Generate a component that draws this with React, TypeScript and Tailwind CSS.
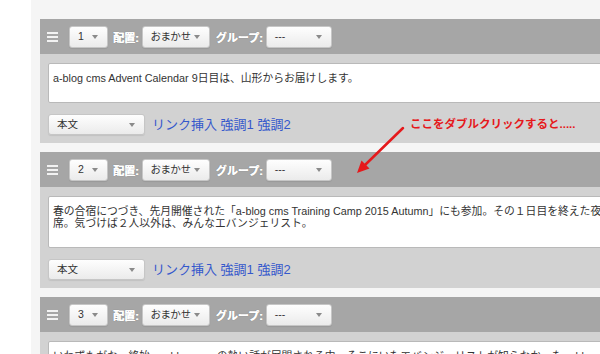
import { ReactNode } from 'react';

const font = "font-['Liberation_Sans','Noto_Sans_CJK_JP',sans-serif]";

const Select = ({ label, width, height = 'h-[22px]' }: { label: string; width: string; height?: string }) => (
  <div
    className={`${width} ${height} flex items-center justify-between rounded-[3px] border border-[#c6c6c6] bg-gradient-to-b from-[#fefefe] to-[#ebebeb] pl-[8px] pr-[9px] text-[10.5px] text-[#333] shadow-[0_1px_1px_rgba(0,0,0,0.08)] [font-feature-settings:'palt']`}
  >
    <span className="whitespace-nowrap leading-none">{label}</span>
    <span className="h-0 w-0 shrink-0 border-l-[3px] border-r-[3px] border-t-[4px] border-l-transparent border-r-transparent border-t-[#8a8a8a]" />
  </div>
);

const Label = ({ children }: { children: ReactNode }) => (
  <span className="text-[11px] font-bold leading-none text-white [text-shadow:0.4px_0_0_#fff,0_0_1px_rgba(0,0,0,0.35)]">
    {children}
  </span>
);

const Handle = () => (
  <div className="flex w-[11px] flex-col gap-[2px]">
    <span className="h-[2px] bg-[#f2f2f2]" />
    <span className="h-[2px] bg-[#f2f2f2]" />
    <span className="h-[2px] bg-[#f2f2f2]" />
  </div>
);

interface UnitProps {
  num: string;
  lines: string[];
}

const Unit = ({ num, lines }: UnitProps) => (
  <div className="w-[640px] shrink-0">
    <div className="flex h-[35px] items-center bg-[#a6a6a6] pl-[7px]">
      <Handle />
      <div className="ml-[11px]">
        <Select label={num} width="w-[39px]" />
      </div>
      <div className="ml-[5px] mr-[3px]">
        <Label>配置:</Label>
      </div>
      <Select label="おまかせ" width="w-[68px]" />
      <div className="ml-[6px] mr-[3px]">
        <Label>グループ:</Label>
      </div>
      <Select label="---" width="w-[66px]" />
    </div>
    <div className="bg-[#d2d2d2] px-[8px] pb-[8px] pt-[9px]">
      <div className="overflow-hidden rounded-[2px] border border-[#b9b9b9] bg-white pb-[18px] pl-[4px] pt-[8px] text-[10.8px] leading-[12px] text-[#333]">
        {lines.map((l, i) => (
          <div key={i} className="whitespace-nowrap">
            {l}
          </div>
        ))}
      </div>
      <div className="mt-[11px] flex items-center gap-[7px]">
        <Select label="本文" width="w-[97px]" height="h-[21px]" />
        <span className="text-[13px] leading-none text-[#3558cc]">リンク挿入 強調1 強調2</span>
      </div>
    </div>
  </div>
);

export default function App() {
  return (
    <div className={`relative h-[354px] w-[600px] overflow-hidden bg-white ${font}`}>
      <div className="ml-[31px] flex h-full flex-col gap-[9px] bg-[#f5f5f5] pl-[9px] pt-[19px]">
        <Unit num="1" lines={['a-blog cms Advent Calendar 9日目は、山形からお届けします。']} />
        <Unit
          num="2"
          lines={[
            '春の合宿につづき、先月開催された「a-blog cms Training Camp 2015 Autumn」にも参加。その１日目を終えた夜の懇親会にも出',
            '席。気づけば２人以外は、みんなエバンジェリスト。',
          ]}
        />
        <Unit
          num="3"
          lines={['いわずもがな、終始、a-blog cms の熱い話が展開される中、そこにいたエバンジェリストが知らなかった a-blog cms の機能']}
        />
      </div>

      <span className="absolute left-[410px] top-[119px] text-[11.5px] font-bold leading-none text-[#e5191c]">
        ここをダブルクリックすると.....
      </span>
      <svg className="absolute left-0 top-0" width="600" height="354" viewBox="0 0 600 354">
        <line x1="403" y1="128" x2="365" y2="165" stroke="#e5191c" strokeWidth="2.5" strokeLinecap="round" />
        <polygon points="357,173 369.5,168.5 361.5,160.5" fill="#e5191c" />
      </svg>
    </div>
  );
}
